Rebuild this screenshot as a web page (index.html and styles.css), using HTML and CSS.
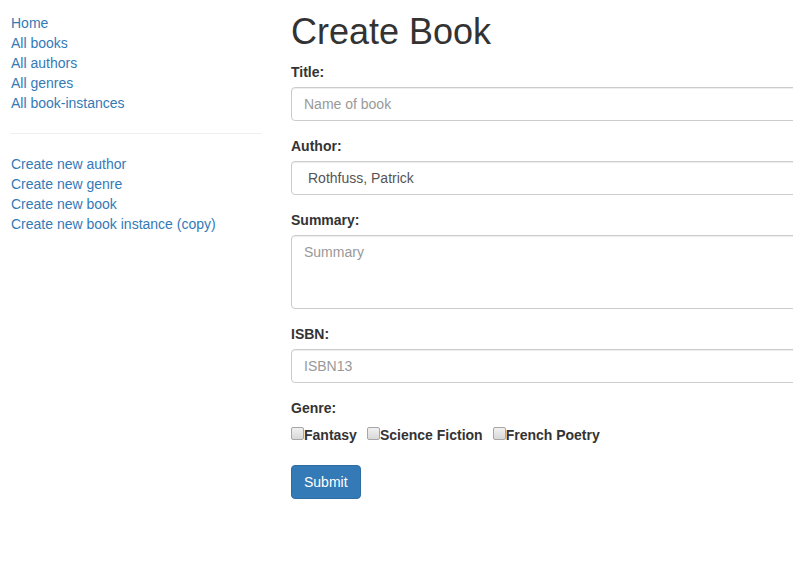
FILE: index.html
```html
<!DOCTYPE html>
<html lang="en">
<head>
<meta charset="utf-8">
<title>Create Book</title>
<link rel="stylesheet" href="styles.css">
</head>
<body>
<div class="page">
  <aside class="sidebar">
    <ul class="sidebar-nav">
      <li><a href="#">Home</a></li>
      <li><a href="#">All books</a></li>
      <li><a href="#">All authors</a></li>
      <li><a href="#">All genres</a></li>
      <li><a href="#">All book-instances</a></li>
    </ul>
    <hr class="divider">
    <ul class="sidebar-nav">
      <li><a href="#">Create new author</a></li>
      <li><a href="#">Create new genre</a></li>
      <li><a href="#">Create new book</a></li>
      <li><a href="#">Create new book instance (copy)</a></li>
    </ul>
  </aside>
  <main class="content">
    <h1 class="title">Create Book</h1>
    <form class="form">
      <div class="form-group">
        <label class="field-label" for="title">Title:</label>
        <input id="title" class="form-control" type="text" placeholder="Name of book">
      </div>
      <div class="form-group">
        <label class="field-label" for="author">Author:</label>
        <select id="author" class="form-control select">
          <option>Rothfuss, Patrick</option>
        </select>
      </div>
      <div class="form-group">
        <label class="field-label" for="summary">Summary:</label>
        <textarea id="summary" class="form-control textarea" placeholder="Summary"></textarea>
      </div>
      <div class="form-group">
        <label class="field-label" for="isbn">ISBN:</label>
        <input id="isbn" class="form-control" type="text" placeholder="ISBN13">
      </div>
      <div class="form-group">
        <label class="field-label">Genre:</label>
        <div class="genres"><div class="genre"><input class="checkbox" type="checkbox" id="g1"><label class="genre-label" for="g1">Fantasy</label></div><div class="genre"><input class="checkbox" type="checkbox" id="g2"><label class="genre-label" for="g2">Science Fiction</label></div><div class="genre"><input class="checkbox" type="checkbox" id="g3"><label class="genre-label" for="g3">French Poetry</label></div></div>
      </div>
      <button type="button" class="btn">Submit</button>
    </form>
  </main>
</div>
</body>
</html>
```

FILE: styles.css
```css
html, body {
  margin: 0;
  padding: 0;
  overflow: hidden;
}
body {
  font-family: "Liberation Sans", Arial, sans-serif;
  font-size: 14px;
  line-height: 20px;
  color: #333;
  background: #fff;
}
.page {
  display: flex;
  align-items: flex-start;
  padding-left: 11px;
}
.sidebar {
  width: 250px;
  flex: 0 0 250px;
  padding-top: 13px;
}
.sidebar-nav {
  list-style: none;
  margin: 0;
  padding: 0;
}
.sidebar-nav a {
  color: #337ab7;
  text-decoration: none;
}
.divider {
  border: 0;
  border-top: 1px solid #eee;
  margin: 20px 0;
}
.content {
  margin-left: 30px;
  flex: 0 0 620px;
  width: 620px;
}
.title {
  font-size: 36px;
  font-weight: 500;
  line-height: 39.6px;
  margin: 12px 0 10px;
  color: #333;
}
.form {
  margin: 0;
}
.form-group {
  margin-bottom: 15px;
}
.field-label {
  display: inline-block;
  font-weight: bold;
  margin-bottom: 5px;
}
.form-control {
  display: block;
  box-sizing: border-box;
  width: 100%;
  height: 34px;
  padding: 6px 12px;
  font-family: inherit;
  font-size: 14px;
  line-height: 20px;
  color: #555;
  background: #fff;
  border: 1px solid #ccc;
  border-radius: 4px;
  box-shadow: inset 0 1px 1px rgba(0,0,0,.075);
  margin: 0;
}
.form-control::placeholder {
  color: #999;
}
.select {
  -webkit-appearance: none;
  appearance: none;
  padding-left: 16px;
}
.textarea {
  height: 74px;
  resize: none;
}
.genres {
  line-height: 20px;
}
.genre {
  display: inline;
  padding-right: 10px;
}
.checkbox {
  -webkit-appearance: none;
  appearance: none;
  width: 13px;
  height: 13px;
  box-sizing: border-box;
  margin: 4px 0 0;
  vertical-align: -1px;
  border: 1px solid #a6a6a6;
  border-radius: 2px;
  background: linear-gradient(#f1f1f1, #d8d8d8);
}
.genre-label {
  display: inline-block;
  font-weight: bold;
  margin-bottom: 5px;
  position: relative;
  top: 1px;
}
.btn {
  display: inline-block;
  margin-top: 1px;
  padding: 6px 12px;
  font-family: inherit;
  font-size: 14px;
  line-height: 20px;
  color: #fff;
  background: #337ab7;
  border: 1px solid #2e6da4;
  border-radius: 4px;
}
```
